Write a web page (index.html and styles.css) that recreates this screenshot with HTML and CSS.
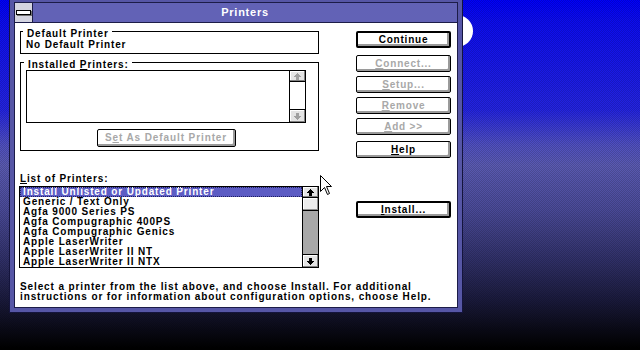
FILE: index.html
```html
<!DOCTYPE html>
<html>
<head>
<meta charset="utf-8">
<title>Printers</title>
<link rel="stylesheet" href="styles.css">
</head>
<body>
<div class="desktop">
  <div class="moon"></div>
  <div class="window">
    <div class="inner">
      <div class="titlebar">
        <div class="sysmenu"><span class="dash"></span></div>
        <div class="title">Printers</div>
      </div>
      <div class="client">
        <div class="main">
          <div class="left">
            <fieldset class="group g1">
              <legend>Default Printer</legend>
              <div class="nodef">No Default Printer</div>
            </fieldset>
            <fieldset class="group g2">
              <legend>Installed <u>P</u>rinters:</legend>
              <div class="listbox small">
                <div class="items"></div>
                <div class="vscroll">
                  <div class="arrow up dis"><svg width="7" height="7" viewBox="0 0 7 7"><polygon points="3.5,0 7,4 5,4 5,7 2,7 2,4 0,4"/></svg></div>
                  <div class="blank"></div>
                  <div class="arrow down dis"><svg width="7" height="7" viewBox="0 0 7 7"><polygon points="3.5,7 7,3 5,3 5,0 2,0 2,3 0,3"/></svg></div>
                </div>
              </div>
              <div class="btnrow"><button class="btn setdef dis">S<u>e</u>t As Default Printer</button></div>
            </fieldset>
            <div class="listlabel"><u>L</u>ist of Printers:</div>
            <div class="listbox big">
              <ul class="items">
                <li class="sel">Install Unlisted or Updated Printer</li>
                <li>Generic / Text Only</li>
                <li>Agfa 9000 Series PS</li>
                <li>Agfa Compugraphic 400PS</li>
                <li>Agfa Compugraphic Genics</li>
                <li>Apple LaserWriter</li>
                <li>Apple LaserWriter II NT</li>
                <li>Apple LaserWriter II NTX</li>
              </ul>
              <div class="vscroll">
                <div class="arrow up"><svg width="7" height="7" viewBox="0 0 7 7"><polygon points="3.5,0 7,4 5,4 5,7 2,7 2,4 0,4"/></svg></div>
                <div class="thumb"></div>
                <div class="track"></div>
                <div class="arrow down"><svg width="7" height="7" viewBox="0 0 7 7"><polygon points="3.5,7 7,3 5,3 5,0 2,0 2,3 0,3"/></svg></div>
              </div>
            </div>
          </div>
          <div class="right">
            <button class="btn def first">Continue</button>
            <button class="btn dis gap7"><u>C</u>onnect...</button>
            <button class="btn dis"><u>S</u>etup...</button>
            <button class="btn dis"><u>R</u>emove</button>
            <button class="btn dis"><u>A</u>dd &gt;&gt;</button>
            <button class="btn help"><u>H</u>elp</button>
            <button class="btn def install"><u>I</u>nstall...</button>
          </div>
        </div>
        <p class="helptext">Select a printer from the list above, and choose Install. For additional<br>instructions or for information about configuration options, choose Help.</p>
      </div>
    </div>
  </div>
  <svg class="cursor" width="13" height="21" viewBox="0 0 13 21"><path d="M0.5 0.5 L0.5 16.5 L4.5 12.5 L7.5 19.5 L9.5 18.5 L6.5 11.5 L11.5 11.5 Z" fill="#fff" stroke="#000" stroke-width="1" stroke-linejoin="miter"/></svg>
</div>
</body>
</html>
```

FILE: styles.css
```css
* { box-sizing: border-box; }
html, body { margin: 0; padding: 0; }
body {
  width: 640px;
  height: 350px;
  overflow: hidden;
  font: bold 10px "Liberation Sans", Arial, sans-serif;
  letter-spacing: 0.85px;
  color: #000;
}
.desktop {
  position: relative;
  width: 640px;
  height: 350px;
  overflow: hidden;
  padding-left: 9px;
  background:
    repeating-conic-gradient(rgba(0,0,0,0.16) 0 25%, transparent 0 50%) 0 0 / 2px 2px,
    linear-gradient(to bottom, #0000fa 0px, #0c0cf0 20px, #2424e0 110px, #5050c0 145px, #5a5ab2 165px, #4a4a98 210px, #303068 260px, #1a1a3c 300px, #0a0a16 330px, #000 348px);
}
.moon {
  position: absolute;
  left: 441px;
  top: 15px;
  width: 32px;
  height: 32px;
  border-radius: 50%;
  background: #fff;
}
.window {
  position: relative;
  z-index: 1;
  width: 454px;
  height: 316px;
  margin-top: -3px;
  border: 1px solid #14143c;
  padding: 4px;
  background: #5656a6;
}
.inner {
  height: 100%;
  border: 1px solid #1c1c48;
  display: flex;
  flex-direction: column;
  background: #fff;
}
.titlebar {
  flex: none;
  height: 20px;
  display: flex;
  background: #6262b6;
  border-bottom: 1px solid #1c1c48;
}
.sysmenu {
  width: 18px;
  border-right: 1px solid #1c1c48;
  background: #d4d4e0;
  display: flex;
  align-items: center;
  justify-content: center;
}
.dash {
  display: block;
  width: 15px;
  height: 5px;
  background: #fff;
  border: 1px solid #000;
  box-shadow: 1px 1px 0 #707070;
}
.title {
  flex: 1;
  text-align: center;
  color: #fff;
  font-size: 11px;
  line-height: 19px;
  letter-spacing: 0.75px;
}
.client {
  flex: 1;
  padding: 0 5px;
  display: flex;
  flex-direction: column;
}
.main {
  display: flex;
  align-items: flex-start;
}
.left {
  width: 299px;
  flex: none;
}
.right {
  width: 95px;
  margin-left: 37px;
  padding-top: 8px;
  display: flex;
  flex-direction: column;
}
fieldset.group {
  margin: 0;
  padding: 0 0 3px 5px;
  border: 1px solid #000;
  min-width: 0;
  width: 299px;
}
.g1 { margin-top: -1px; padding-left: 6px; }
legend {
  padding: 6px 3px 0 4px;
  margin-left: -2px;
  line-height: 10px;
  background: #fff;
}
.g1 legend { margin-left: -3px; }
.nodef {
  line-height: 11px;
}
.listbox {
  border: 1px solid #000;
  display: flex;
  background: #fff;
}
.listbox.small {
  width: 280px;
  height: 53px;
}
.listbox.big {
  width: 300px;
  height: 82px;
  margin-left: -1px;
}
.items {
  flex: 1;
  margin: 0;
  padding: 0;
  list-style: none;
}
.items li {
  height: 10px;
  line-height: 10px;
  padding-left: 3px;
  white-space: nowrap;
}
.items li.sel {
  background: #5c5cc4;
  color: #fff;
  outline: 1px dotted #202060;
  outline-offset: -1px;
}
.vscroll {
  width: 16px;
  flex: none;
  border-left: 1px solid #000;
  display: flex;
  flex-direction: column;
}
.arrow {
  display: flex;
  align-items: center;
  justify-content: center;
  background: #e4e4e4;
  box-shadow: inset -1px -1px 0 #808080, inset 1px 1px 0 #fff;
}
.arrow svg { display: block; shape-rendering: crispEdges; }
.arrow polygon { fill: #000; }
.arrow.dis polygon { fill: #a0a0a0; }
.arrow.up { height: 11px; border-bottom: 1px solid #000; }
.arrow.down { height: 13px; border-top: 1px solid #000; }
.blank { flex: 1; background: #fff; }
.thumb {
  height: 13px;
  background: #ececec;
  border-bottom: 1px solid #000;
  box-shadow: inset -1px -1px 0 #909090, inset 1px 1px 0 #fff;
}
.track { flex: 1; background: #a8a8a8; }
.btnrow {
  width: 280px;
  margin-top: 6px;
  display: flex;
  justify-content: center;
}
.btn {
  display: block;
  width: 95px;
  height: 17px;
  margin: 4px 0 0;
  padding: 0 0 1px;
  border: 1px solid #000;
  border-radius: 2px;
  background: #fff;
  box-shadow: inset -2px -2px 0 #9a9a9a, inset 1px 1px 0 #fff;
  font: inherit;
  letter-spacing: 0.8px;
  line-height: 13px;
  color: #000;
  text-align: center;
}
.btn.def { border-width: 2px; }
.btn.first { margin-top: 0; }
.btn.gap7 { margin-top: 7px; }
.btn.help { margin-top: 6px; }
.btn.install { margin-top: 43px; }
.btn.dis { color: #a8a8a8; }
.btn.setdef { width: 139px; height: 18px; margin-top: 0; letter-spacing: 0.9px; }
u { text-decoration: underline; text-underline-offset: 1px; }
.listlabel {
  margin: 22px 0 2px;
  line-height: 11px;
}
.helptext {
  margin: 14px 0 0;
  line-height: 10px;
  letter-spacing: 0.88px;
}
.cursor {
  position: absolute;
  left: 320px;
  top: 175px;
  z-index: 2;
}
```
